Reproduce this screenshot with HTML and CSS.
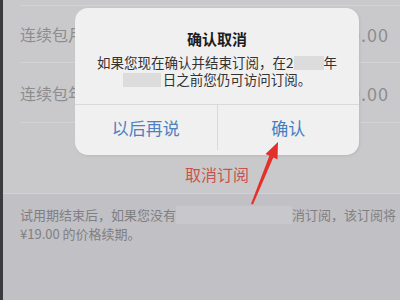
FILE: index.html
```html
<!DOCTYPE html>
<html>
<head>
	<title>确认取消</title>
	<link rel="stylesheet" href="styles.css">
</head>
<body>
<div id="screen">
	<div class="list">
		<div class="row">
			<span class="plan">连续包月</span>
			<span class="price">¥19.00</span>
		</div>
		<div class="row second">
			<span class="plan">连续包年</span>
			<span class="price">¥19.00</span>
		</div>
	</div>
	<div class="cancel">取消订阅</div>
	<div class="note">
		<div class="line">试用期结束后，如果您没有<span class="mask wide"></span>消订阅，该订阅将</div>
		<div class="line">¥19.00 的价格续期。</div>
	</div>

	<div id="dialog">
		<div class="title">确认取消</div>
		<div class="message">
			<div>如果您现在确认并结束订阅，在2<span class="mask"></span>年</div>
			<div><span class="mask second"></span>日之前您仍可访问订阅。</div>
		</div>
		<div class="buttons">
			<button class="later">以后再说</button>
			<button class="ok">确认</button>
		</div>
	</div>

	<svg id="arrow" width="400" height="300" viewBox="0 0 400 300">
		<polygon points="251,204 253,204.5 273.5,157 269.5,155.5" fill="#e3302b"/>
		<polygon points="278,142 277.5,159.5 265.5,154" fill="#e3302b"/>
	</svg>
</div>
</body>
</html>
```

FILE: styles.css
```css
body{
	margin: 0;
	width: 400px;
	height: 300px;
	overflow: hidden;
	font-family: "Noto Sans CJK SC", "Noto Sans", sans-serif;
}
#screen{
	position: relative;
	width: 397px;
	height: 300px;
	overflow: hidden;
	background: #c1c0c5;
	border-left: 3px solid #3b3b3d;
}
.list{
	width: 428px;
	background: #c9c9cb;
	padding-top: 5px;
}
.row{
	display: flex;
	justify-content: space-between;
	align-items: center;
	height: 56px;
	margin-left: 17px;
	padding-right: 42px;
	border-top: 1px solid #d3d3d5;
	font-size: 16px;
	color: #8d8d90;
}
.price{
	font-size: 18px;
	letter-spacing: 1px;
}
.row.second{
	height: 59px;
	border-bottom: 1px solid #d3d3d5;
}
.cancel{
	width: 428px;
	background: #c9c9cb;
	height: 70px;
	line-height: 102px;
	text-align: center;
	font-size: 16px;
	color: #c9534c;
	border-bottom: 1px solid #d2d2d4;
}
.note{
	padding: 11px 0 0 17px;
	font-size: 13px;
	line-height: 19px;
	color: #7f7f83;
}
.line{
	white-space: nowrap;
}
.mask{
	display: inline-block;
	width: 30px;
	height: 14px;
	vertical-align: -2px;
	background: #dcdcdd;
}
.mask.second{
	width: 38px;
	margin-right: 2px;
}
.mask.wide{
	width: 116px;
	height: 18px;
	background: #c8c7cb;
	vertical-align: -4px;
}

#dialog{
	position: absolute;
	left: 72px;
	top: 8px;
	width: 284px;
	height: 147px;
	border-radius: 13px;
	background: #f0f0f0;
	text-align: center;
	box-shadow: 1px 1px 3px rgba(0,0,0,0.08);
}
.title{
	padding-top: 21px;
	font-size: 15px;
	line-height: 20px;
	font-weight: bold;
	color: #1d1d1f;
}
.message{
	margin-top: 5px;
	height: 50px;
	font-size: 13.5px;
	line-height: 17px;
	color: #333;
	white-space: nowrap;
}
.buttons{
	display: flex;
	border-top: 1px solid #d9d9db;
}
button{
	flex: 1;
	height: 45px;
	border: none;
	background: none;
	font-family: inherit;
	font-size: 17px;
	color: #4f80bf;
	outline: none;
}
button.ok{
	border-left: 1px solid #d9d9db;
	color: #3f7fc4;
}
#arrow{
	position: absolute;
	left: -3px;
	top: 0;
}
```
